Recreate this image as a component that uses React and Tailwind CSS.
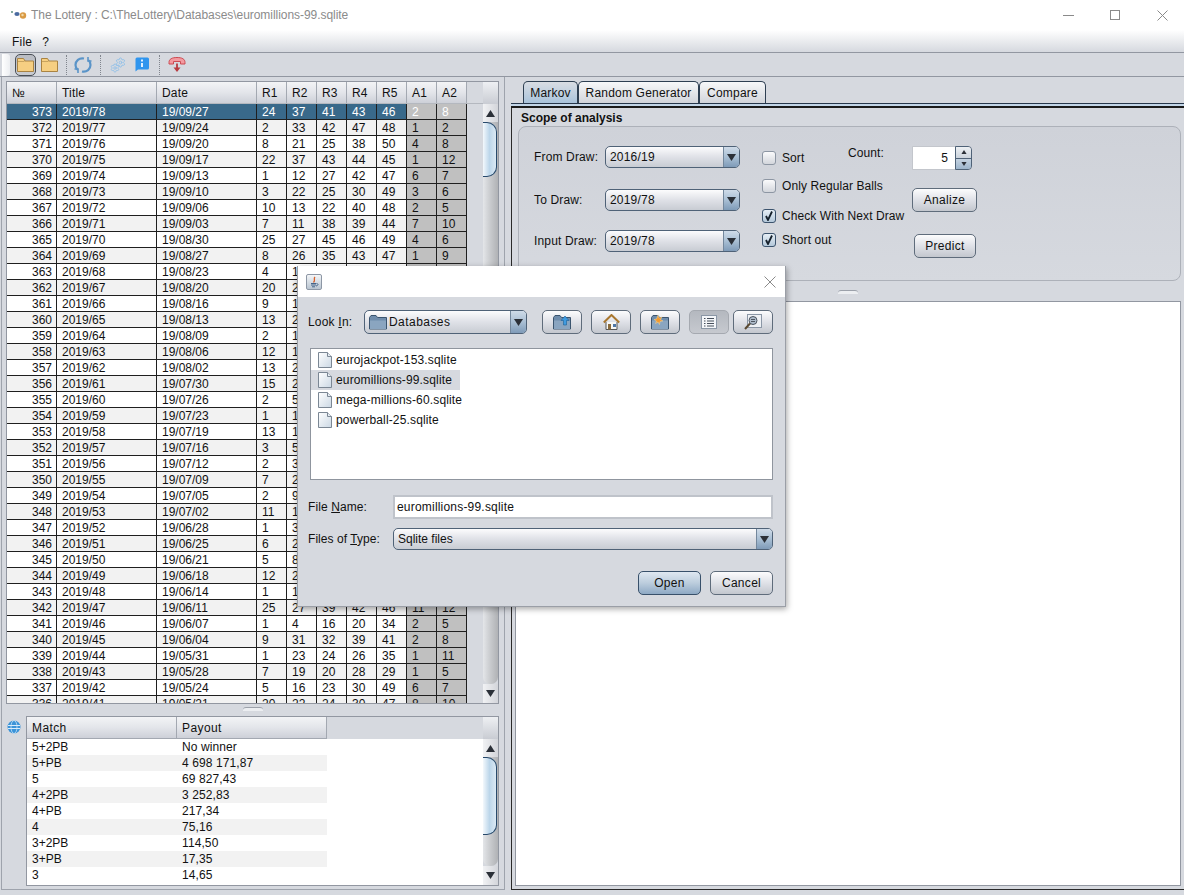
import { Settings } from "lucide-react";

const draws = [
  [373, "2019/78", "19/09/27", 24, 37, 41, 43, 46, 2, 8],
  [372, "2019/77", "19/09/24", 2, 33, 42, 47, 48, 1, 2],
  [371, "2019/76", "19/09/20", 8, 21, 25, 38, 50, 4, 8],
  [370, "2019/75", "19/09/17", 22, 37, 43, 44, 45, 1, 12],
  [369, "2019/74", "19/09/13", 1, 12, 27, 42, 47, 6, 7],
  [368, "2019/73", "19/09/10", 3, 22, 25, 30, 49, 3, 6],
  [367, "2019/72", "19/09/06", 10, 13, 22, 40, 48, 2, 5],
  [366, "2019/71", "19/09/03", 7, 11, 38, 39, 44, 7, 10],
  [365, "2019/70", "19/08/30", 25, 27, 45, 46, 49, 4, 6],
  [364, "2019/69", "19/08/27", 8, 26, 35, 43, 47, 1, 9],
  [363, "2019/68", "19/08/23", 4, 14],
  [362, "2019/67", "19/08/20", 20, 26],
  [361, "2019/66", "19/08/16", 9, 15],
  [360, "2019/65", "19/08/13", 13, 27],
  [359, "2019/64", "19/08/09", 2, 10],
  [358, "2019/63", "19/08/06", 12, 16],
  [357, "2019/62", "19/08/02", 13, 28],
  [356, "2019/61", "19/07/30", 15, 21],
  [355, "2019/60", "19/07/26", 2, 5],
  [354, "2019/59", "19/07/23", 1, 11],
  [353, "2019/58", "19/07/19", 13, 17],
  [352, "2019/57", "19/07/16", 3, 5],
  [351, "2019/56", "19/07/12", 2, 31],
  [350, "2019/55", "19/07/09", 7, 24],
  [349, "2019/54", "19/07/05", 2, 9],
  [348, "2019/53", "19/07/02", 11, 14],
  [347, "2019/52", "19/06/28", 1, 30],
  [346, "2019/51", "19/06/25", 6, 22],
  [345, "2019/50", "19/06/21", 5, 8],
  [344, "2019/49", "19/06/18", 12, 23],
  [343, "2019/48", "19/06/14", 1, 18],
  [342, "2019/47", "19/06/11", 25, 27, 39, 42, 46, 11, 12],
  [341, "2019/46", "19/06/07", 1, 4, 16, 20, 34, 2, 5],
  [340, "2019/45", "19/06/04", 9, 31, 32, 39, 41, 2, 8],
  [339, "2019/44", "19/05/31", 1, 23, 24, 26, 35, 1, 11],
  [338, "2019/43", "19/05/28", 7, 19, 20, 28, 29, 1, 5],
  [337, "2019/42", "19/05/24", 5, 16, 23, 30, 49, 6, 7],
  [336, "2019/41", "19/05/21", 20, 22, 24, 30, 47, 8, 10],
];

const payouts = [
  ["5+2PB", "No winner"],
  ["5+PB", "4 698 171,87"],
  ["5", "69 827,43"],
  ["4+2PB", "3 252,83"],
  ["4+PB", "217,34"],
  ["4", "75,16"],
  ["3+2PB", "114,50"],
  ["3+PB", "17,35"],
  ["3", "14,65"],
];

const columns = ["№", "Title", "Date", "R1", "R2", "R3", "R4", "R5", "A1", "A2"];
const files = ["eurojackpot-153.sqlite", "euromillions-99.sqlite", "mega-millions-60.sqlite", "powerball-25.sqlite"];

function Folder({ className = "" }) {
  return (
    <svg width="17" height="15" viewBox="0 0 17 15" className={className}>
      <path d="M.5 14.500V1.500h6l1.500 2.500h8.500v10.500z" fill="#f6cf82" stroke="#a98342" />
      <path d="M1 4.500h6.500" stroke="#c9a45f" />
    </svg>
  );
}

function Refresh() {
  return (
    <svg width="18" height="18" viewBox="0 0 18 18" fill="none" stroke="#5a94c8" strokeWidth="2.200">
      <path d="M10 2.500C5 1.500 1.500 5 1.500 9c0 2 .8 3.800 2.300 5" />
      <path d="M8 15.500c5 1 8.500-2.500 8.500-6.500 0-2-.8-3.800-2.300-5" />
      <path d="M14 1v4h3.500M4 17v-4H.5" strokeWidth="1.600" />
    </svg>
  );
}

function Gears() {
  return (
    <div className="relative w-[16px] h-[16px]">
      <Settings size={10} strokeWidth={2} className="absolute left-0 bottom-0 text-[#8fbfe8]" />
      <Settings size={11} strokeWidth={2} className="absolute right-0 top-0 text-[#8fbfe8]" />
    </div>
  );
}

function InfoBubble() {
  return (
    <svg width="14" height="15" viewBox="0 0 14 15">
      <path d="M2 .5h10.500a1.500 1.500 0 0 1 1.500 1.500v9a1.500 1.500 0 0 1-1.500 1.500H3L.5 14.500V2A1.500 1.500 0 0 1 2 .5z" fill="#2f95ee" />
      <rect x="6" y="2.500" width="2" height="2" fill="#dff0ff" />
      <rect x="6" y="6" width="2" height="4" fill="#dff0ff" />
    </svg>
  );
}

function HangUp() {
  return (
    <svg width="18" height="18" viewBox="0 0 18 18">
      <path d="M1 6.500C1 3 4 1.500 9 1.500S17 3 17 6.500V8h-4.500V5.500h-7V8H1z" fill="#f39aa0" stroke="#cc4b52" />
      <path d="M9 7.500v7" stroke="#b83b40" strokeWidth="1.800" />
      <path d="M5.500 11.500L9 16l3.500-4.500z" fill="#b83b40" />
    </svg>
  );
}

function AppMark() {
  return (
    <svg width="18" height="10" viewBox="0 0 18 10">
      <circle cx="2" cy="2" r="1" fill="#5f8f80" />
      <ellipse cx="7" cy="4" rx="2.600" ry="2" fill="#4a6aa0" />
      <circle cx="13" cy="5.500" r="3.200" fill="#d99a45" />
      <circle cx="12.500" cy="5" r="1.200" fill="#f2d9a8" />
    </svg>
  );
}

function JavaMark() {
  return (
    <div className="w-[16px] h-[16px] rounded-[2px] border border-[#8d97a5] bg-gradient-to-b from-[#f4f6f8] to-[#b9c5d1] flex items-center justify-center">
      <svg width="12" height="12" viewBox="0 0 12 12" fill="none">
        <path d="M7 1C5 3 8 4 5.500 6.500" stroke="#d9602a" strokeWidth="1.300" />
        <path d="M3 7.500h5M3 9h5M4 10.800h3" stroke="#44648a" />
        <path d="M8.500 7.500c2 0 2 2-.5 2.500" stroke="#44648a" />
      </svg>
    </div>
  );
}

function FileIcon() {
  return (
    <svg width="14" height="16" viewBox="0 0 14 16" className="shrink-0">
      <defs>
        <linearGradient id="filePage" x1="0" y1="0" x2="1" y2="1">
          <stop offset="0" stopColor="#ffffff" />
          <stop offset="1" stopColor="#cbd8e4" />
        </linearGradient>
      </defs>
      <path d="M.5.500h9l4 4v11H.5z" fill="url(#filePage)" stroke="#7b8794" />
      <path d="M9.500.500v4h4" fill="#e7edf3" stroke="#7b8794" />
    </svg>
  );
}

function BlueFolder({ children }) {
  return (
    <svg width="18" height="16" viewBox="0 0 18 16">
      <path d="M.5 15V3.500l1.500-2h5l1.500 2h9V15z" fill="#6f8dac" stroke="#3b556f" />
      <path d="M1 6.500h16V15H1z" fill="#8aa5c0" />
      {children}
    </svg>
  );
}

function HomeIcon() {
  return (
    <svg width="17" height="16" viewBox="0 0 17 16">
      <path d="M3 8v7.500h11V8" fill="#f7f7f5" stroke="#555" />
      <path d="M.8 8.500L8.500 1l7.700 7.500" fill="none" stroke="#a9772e" strokeWidth="2" />
      <rect x="5" y="10" width="3" height="5.500" fill="#8a6a3a" />
      <rect x="10" y="10" width="3" height="3" fill="#4e76a6" />
    </svg>
  );
}

function ListIcon() {
  return (
    <svg width="16" height="14" viewBox="0 0 16 14">
      <rect x=".5" y=".5" width="15" height="13" fill="#f4f6f9" stroke="#8b97a6" />
      <path d="M3 3.500h1.500M6 3.500h7M3 6h1.500M6 6h7M3 8.500h1.500M6 8.500h7M3 11h1.500M6 11h7" stroke="#47505c" />
    </svg>
  );
}

function DetailsIcon() {
  return (
    <svg width="18" height="16" viewBox="0 0 18 16">
      <rect x="3.500" y=".5" width="14" height="13" fill="#eef1f5" stroke="#8b97a6" />
      <circle cx="9" cy="6.500" r="4" fill="#aebccb" stroke="#4d5560" />
      <path d="M7 5.500h4M7 7.500h4" stroke="#4d5560" />
      <path d="M6 9.500L1 15" stroke="#5b4a32" strokeWidth="2" />
    </svg>
  );
}

function Triangle({ dir = "down", size = 9 }) {
  return (
    <svg width={size} height={size - 2} viewBox="0 0 9 7">
      <path d={dir === "down" ? "M0 0h9L4.500 7z" : "M0 7h9L4.500 0z"} fill="#2b3038" />
    </svg>
  );
}

function Combo({ className = "", children }) {
  return (
    <div className={`flex rounded-[5px] border border-[#4f6277] overflow-hidden bg-gradient-to-b from-[#fcfcfd] via-[#dfe1e7] to-[#c8ccd3] ${className}`}>
      <div className="flex-1 flex items-center gap-[2px] px-[4px] min-w-0">{children}</div>
      <div className="w-[16px] border-l border-[#73879c] flex items-center justify-center bg-gradient-to-b from-[#cfdbe8] via-[#a9bfd4] to-[#7f9bb8]">
        <Triangle />
      </div>
    </div>
  );
}

function Button({ className = "", primary, children }) {
  const look = primary
    ? "border-[#38506a] from-[#dfe8f1] via-[#bccddd] to-[#8ea9c4]"
    : "border-[#5f6c7b] from-[#fcfcfd] via-[#dfe1e7] to-[#c3c7ce]";
  return (
    <div className={`flex items-center justify-center rounded-[5px] border bg-gradient-to-b ${look} ${className}`}>
      {children}
    </div>
  );
}

function Checkbox({ checked, label, className = "" }) {
  return (
    <div className={`flex items-center gap-[6px] ${className}`}>
      <div className={`w-[14px] h-[14px] rounded-[3px] border flex items-center justify-center bg-gradient-to-b ${checked ? "border-[#3b536d] from-[#e6eef5] to-[#b4c8da]" : "border-[#8d96a3] from-[#fbfbfc] to-[#d3d6dc]"}`}>
        {checked && (
          <svg width="10" height="10" viewBox="0 0 10 10" fill="none">
            <path d="M2 5l2 4 4-8.500" stroke="#15202b" strokeWidth="1.800" />
          </svg>
        )}
      </div>
      <span className="tracking-[0.08px]">{label}</span>
    </div>
  );
}

function Scrollbar({ thumbHeight }) {
  return (
    <div className="w-[15px] h-full flex flex-col shrink-0">
      <div className="h-[22px] shrink-0 bg-gradient-to-b from-[#eef0f3] to-[#c9ccd3]" />
      <div className="h-[18px] shrink-0 flex items-center justify-center bg-gradient-to-r from-[#f1f2f4] to-[#d3d5da]">
        <Triangle dir="up" />
      </div>
      <div className="flex-1 min-h-0 overflow-hidden bg-gradient-to-r from-[#e4e6e9] via-[#c8cacd] to-[#b0b2b5] rounded-b-[7px]">
        <div
          className="w-[14px] rounded-r-[10px] border border-l-0 border-[#27496b] bg-gradient-to-r from-[#f3f8fc] via-[#bcd6ea] to-[#dbe9f4]"
          style={{ height: thumbHeight }}
        />
      </div>
      <div className="h-[19px] shrink-0 flex items-center justify-center bg-gradient-to-r from-[#f1f2f4] to-[#d3d5da]">
        <Triangle />
      </div>
    </div>
  );
}

function Splitter({ className = "" }) {
  return (
    <div className={`flex justify-center items-center shrink-0 ${className}`}>
      <div className="w-[20px] h-[4px] rounded-t-[3px] border-t border-[#9ca1aa] bg-[#eceef1]" />
    </div>
  );
}

function DrawRow({ row, index }) {
  const selected = index === 0;
  const stripe = index % 2 === 1 ? "bg-[#f2f2f2]" : "bg-white";
  const base = selected ? "bg-[#39698a] text-white" : `${stripe} text-[#111]`;
  const cells = Array.from({ length: 10 }, (_, i) => (row[i] === undefined ? "" : row[i]));
  return (
    <div className="grid grid-cols-[50px_100px_100px_repeat(7,30px)] h-[16px] leading-[17px]">
      {cells.map((value, i) => (
        <div
          key={i}
          className={`border-r border-b border-[#1f1f1f] pl-[5px] overflow-hidden whitespace-nowrap ${i === 0 ? "text-right pr-[4px]" : ""} ${i > 7 ? `bg-[#c0c0c0] ${selected ? "text-white" : "text-[#111]"}` : base}`}
        >
          {value}
        </div>
      ))}
    </div>
  );
}

function HeaderCell({ className = "", children }) {
  return (
    <div className={`h-full flex items-center pl-[5px] border-r border-[#a3a8b1] bg-gradient-to-b from-[#f3f4f6] via-[#e3e5ea] to-[#cdd0d8] ${className}`}>
      {children}
    </div>
  );
}

function FileDialog() {
  return (
    <div className="absolute left-[297px] top-[266px] w-[489px] h-[341px] flex flex-col bg-[#d6d9df] border border-[#9a9ea6] border-t-0 shadow-[1px_2px_6px_rgba(0,0,0,0.35)] text-[#111]">
      <div className="h-[31px] bg-white shrink-0 flex items-center justify-between pl-[8px] pr-[9px]">
        <JavaMark />
        <svg width="12" height="12" viewBox="0 0 12 12" stroke="#8a8a8a">
          <path d="M.5.500l11 11M11.500.500l-11 11" />
        </svg>
      </div>
      <div className="flex items-center mt-[13px] pl-[10px] pr-[12px] h-[24px]">
        <span className="w-[56px] tracking-[0.2px]">Look <span className="underline">I</span>n:</span>
        <Combo className="w-[163px] h-[24px]">
          <BlueFolder />
          <span className="tracking-[0.45px]">Databases</span>
        </Combo>
        <Button className="w-[40px] h-[24px] ml-[15px]">
          <BlueFolder>
            <path d="M12 2L8 6.500h2.500V11h3V6.500H16z" fill="#3f9be0" stroke="#1f5f96" strokeWidth=".6" />
          </BlueFolder>
        </Button>
        <Button className="w-[40px] h-[24px] ml-[9px]"><HomeIcon /></Button>
        <Button className="w-[40px] h-[24px] ml-[9px]">
          <BlueFolder>
            <path d="M7 1l1 3 3-1-1.500 2.500L12 7 9 7.500 8.500 10.500 7 8l-2.500 1.500L5.500 7 3 5.500 5.500 5z" fill="#f29a2e" stroke="#fbe3a8" strokeWidth=".4" />
          </BlueFolder>
        </Button>
        <div className="w-[40px] h-[24px] ml-[9px] rounded-[5px] border border-[#a5a9b0] bg-gradient-to-b from-[#b4b8bf] to-[#c6c9cf] flex items-center justify-center">
          <ListIcon />
        </div>
        <Button className="w-[40px] h-[24px] ml-[4px]"><DetailsIcon /></Button>
      </div>
      <div className="mt-[14px] mx-[12px] h-[132px] bg-white border border-[#8f959e] pt-[1px]">
        {files.map((name, i) => (
          <div key={name} className={`h-[20px] w-fit flex items-center gap-[4px] pl-[7px] pr-[8px] tracking-[0.15px] ${i === 1 ? "bg-[#d6d9df]" : ""}`}>
            <FileIcon />
            {name}
          </div>
        ))}
      </div>
      <div className="flex items-center mt-[15px] pl-[10px] pr-[12px] h-[24px]">
        <span className="w-[85px] tracking-[0.1px]">File <span className="underline">N</span>ame:</span>
        <div className="flex-1 h-full bg-white border-2 border-[#bfc3ca] flex items-center pl-[2px] tracking-[0.2px]">euromillions-99.sqlite</div>
      </div>
      <div className="flex items-center mt-[9px] pl-[10px] pr-[12px] h-[22px]">
        <span className="w-[85px] tracking-[0.05px]">Files of <span className="underline">T</span>ype:</span>
        <Combo className="flex-1 h-full">Sqlite files</Combo>
      </div>
      <div className="flex justify-end gap-[9px] mt-[21px] pr-[12px]">
        <Button primary className="w-[63px] h-[24px] tracking-[0.3px]">Open</Button>
        <Button className="w-[63px] h-[24px] tracking-[0.3px]">Cancel</Button>
      </div>
    </div>
  );
}

function Tab({ active, className = "", children }) {
  return (
    <div className={`h-[22px] flex items-center justify-center rounded-t-[5px] border border-b-0 border-[#2e3f52] tracking-[0.2px] bg-gradient-to-b ${active ? "from-[#d9dde3] to-[#a9c3db]" : "from-[#f7f8f9] to-[#d2d5db]"} ${className}`}>
      {children}
    </div>
  );
}

function MarkovForm() {
  const fields = [["From Draw:", "2016/19", "mt-[19px]"], ["To Draw:", "2019/78", "mt-[21px]"], ["Input Draw:", "2019/78", "mt-[19px]"]];
  return (
    <div className="h-[155px] ml-[6px] mr-[3px] mt-[1px] rounded-[8px] border border-[#adb1b9] bg-gradient-to-b from-[#cfd2d9] to-[#d6d9df] flex shrink-0">
      <div className="w-[243px] pl-[15px]">
        {fields.map(([label, value, gap]) => (
          <div key={label} className={`flex items-center h-[22px] ${gap}`}>
            <span className="w-[71px] tracking-[0.15px]">{label}</span>
            <Combo className="w-[135px] h-[22px]">
              <span className="tracking-[0.2px]">{value}</span>
            </Combo>
          </div>
        ))}
      </div>
      <div className="w-[150px] pt-[22px]">
        <div className="flex items-start justify-between pr-[28px]">
          <Checkbox label="Sort" />
          <span className="-mt-[5px] tracking-[0.1px]">Count:</span>
        </div>
        <Checkbox label="Only Regular Balls" className="mt-[10px]" />
        <Checkbox checked label="Check With Next Draw" className="mt-[12px]" />
        <Checkbox checked label="Short out" className="mt-[6px]" />
      </div>
      <div className="pt-[19px]">
        <div className="flex w-[60px] h-[24px] border border-[#c3c6cc] rounded-r-[4px]">
          <div className="flex-1 bg-white flex items-center justify-end pr-[7px]">5</div>
          <div className="w-[17px] flex flex-col rounded-r-[4px] border border-[#4f6277] overflow-hidden -my-[1px] -mr-[1px]">
            <div className="flex-1 flex items-center justify-center bg-gradient-to-b from-[#eef1f4] to-[#cbd3dc]"><Triangle dir="up" size={6} /></div>
            <div className="flex-1 flex items-center justify-center border-t border-[#4f6277] bg-gradient-to-b from-[#c5d3e1] to-[#9db5cc]"><Triangle size={6} /></div>
          </div>
        </div>
        <Button className="w-[65px] h-[24px] mt-[18px] tracking-[0.3px]">Analize</Button>
        <Button className="w-[62px] h-[24px] mt-[22px] ml-[2px] tracking-[0.3px]">Predict</Button>
      </div>
    </div>
  );
}

export default function App() {
  return (
    <div className="relative w-[1184px] h-[895px] overflow-hidden bg-[#d6d9df] text-[12px] text-[#111] font-['Liberation_Sans',Arial,sans-serif]">
      {/* title bar */}
      <div className="h-[30px] bg-white flex items-center pl-[10px] text-[#8b8b8b]">
        <AppMark />
        <span className="ml-[3px] tracking-[-0.05px]">The Lottery : C:\TheLottery\Databases\euromillions-99.sqlite</span>
        <div className="ml-auto flex items-center">
          <div className="w-[11px] h-px bg-[#8a8a8a] mr-[36px]" />
          <div className="w-[10px] h-[10px] border border-[#8a8a8a] mr-[37px]" />
          <svg width="11" height="11" viewBox="0 0 11 11" stroke="#8a8a8a" className="mr-[16px]">
            <path d="M.5.500l10 10M10.500.500l-10 10" />
          </svg>
        </div>
      </div>

      {/* menu bar */}
      <div className="h-[23px] pt-[1px] border-b border-[#9297a1] bg-gradient-to-b from-white to-[#d6d9df] flex items-center gap-[10px] pl-[12px] tracking-[0.2px]">
        <span>File</span>
        <span>?</span>
      </div>

      {/* toolbar */}
      <div className="h-[24px] border-b border-[#9297a1] flex items-center pl-[2px]">
        <div className="w-[8px] h-[22px] rounded-r-[3px] bg-gradient-to-r from-white to-[#eceef1]" />
        <div className="w-[21px] h-[22px] ml-[5px] rounded-[5px] border border-[#4a4f56] bg-gradient-to-b from-[#b9bcc3] to-[#c9ccd2] flex items-center justify-center">
          <Folder />
        </div>
        <Folder className="ml-[5px]" />
        <div className="h-[20px] ml-[8px] border-l border-dotted border-[#80858d]" />
        <div className="ml-[7px]"><Refresh /></div>
        <div className="h-[20px] ml-[8px] border-l border-dotted border-[#80858d]" />
        <div className="ml-[9px]"><Gears /></div>
        <div className="ml-[9px]"><InfoBubble /></div>
        <div className="h-[20px] ml-[10px] border-l border-dotted border-[#80858d]" />
        <div className="ml-[8px]"><HangUp /></div>
      </div>

      {/* main split */}
      <div className="flex h-[818px]">
        <div className="w-[504px] h-[813px] ml-[1px] pt-[4px] pl-[4px] pr-[5px] border-l border-b border-r border-[#9ea3ac] flex flex-col">
          <div className="h-[623px] shrink-0 flex border border-[#9297a1] overflow-hidden">
            <div className="w-[476px] flex flex-col min-w-0">
              <div className="h-[22px] shrink-0 flex border-b border-[#b4b8bf]">
                {columns.map((name, i) => (
                  <HeaderCell key={name} className={i === 0 ? "w-[50px]" : i < 3 ? "w-[100px]" : "w-[30px]"}>
                    <span className="tracking-[0.2px]">{name}</span>
                  </HeaderCell>
                ))}
              </div>
              <div className="flex-1 overflow-hidden">
                {draws.map((row, i) => (
                  <DrawRow key={row[0]} row={row} index={i} />
                ))}
              </div>
            </div>
            <Scrollbar thumbHeight={55} />
          </div>
          <Splitter className="h-[12px] pb-[3px]" />
          <div className="flex-1 flex min-h-0 pb-[3px]">
            <svg width="14" height="14" viewBox="0 0 14 14" className="ml-[1px] mt-[4px] shrink-0">
              <circle cx="7" cy="7" r="6.500" fill="#3a93d8" />
              <path d="M1 5.500h12M1 8.500h12" stroke="#d8ecfb" />
              <ellipse cx="7" cy="7" rx="3" ry="6.500" fill="none" stroke="#d8ecfb" strokeWidth=".7" />
            </svg>
            <div className="ml-[5px] w-[474px] h-[170px] flex border border-[#9297a1] overflow-hidden">
              <div className="w-[457px] flex flex-col bg-white">
                <div className="h-[22px] shrink-0 flex bg-[#d6d9df]">
                  <HeaderCell className="w-[150px] border-b border-[#9ca1aa] tracking-[0.4px]">Match</HeaderCell>
                  <HeaderCell className="w-[150px] border-b border-[#9ca1aa] tracking-[0.4px]">Payout</HeaderCell>
                </div>
                {payouts.map(([match, payout], i) => (
                  <div key={match} className={`grid grid-cols-[150px_150px] w-[300px] h-[16px] leading-[16px] ${i % 2 === 1 ? "bg-[#f2f2f2]" : ""}`}>
                    <div className="pl-[5px]">{match}</div>
                    <div className="pl-[5px] tracking-[0.1px]">{payout}</div>
                  </div>
                ))}
              </div>
              <Scrollbar thumbHeight={78} />
            </div>
          </div>
        </div>

        <div className="flex-1 ml-[6px] h-[813px] min-w-0 flex flex-col">
          <div className="flex h-[26px] pt-[4px] pl-[12px] shrink-0">
            <Tab active className="w-[55px]">Markov</Tab>
            <Tab className="w-[121px]">Random Generator</Tab>
            <Tab className="w-[67px]">Compare</Tab>
          </div>
          <div className="h-[5px] shrink-0 bg-[#c3d6e8] border-t border-[#26364a] border-b-2 border-b-[#1b1b1b]" />
          <div className="flex-1 min-h-0 border-l border-b border-[#2a2a2a] flex flex-col">
            <div className="h-[17px] pl-[9px] pt-[3px] font-bold leading-[14px] shrink-0">Scope of analysis</div>
            <MarkovForm />
            <Splitter className="h-[20px] pt-[1px]" />
            <div className="flex-1 ml-[3px] mr-[3px] mb-[3px] bg-white border border-[#9297a1]" />
          </div>
        </div>
      </div>

      <FileDialog />
    </div>
  );
}
